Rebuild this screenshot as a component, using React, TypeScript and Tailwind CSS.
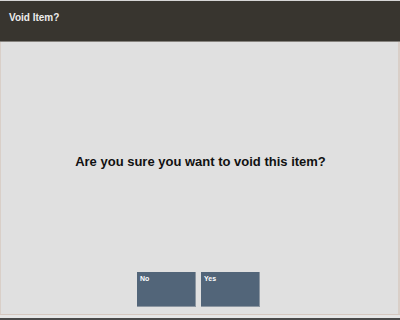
import React from 'react';

const font = { fontFamily: '"Liberation Sans", Arial, sans-serif' };

const PromptButton = ({ label }: { label: string }) => (
  <button className="flex h-[35px] w-[59px] items-start border-r border-b border-[#8c96a1] bg-[#526579] pt-[3px] pl-[3px] text-left text-[7px] leading-[8px] font-bold text-white">
    {label}
  </button>
);

const App = () => {
  return (
    <div className="flex h-[320px] w-[400px] flex-col bg-[#e0e0e0]" style={font}>
      <div className="h-px bg-[#d6d6d6]" />
      <div className="h-[40px] bg-[#38352f] pt-[11px] pl-[9px]">
        <h1 className="text-[10px] leading-[12px] font-bold text-[#ececec]">Void Item?</h1>
      </div>
      <div className="h-px bg-[#85827d]" />

      <div className="flex flex-1 flex-col border-r-2 border-l border-[#d9cfc8] bg-[#e0e0e0]">
        <p className="mt-[112px] pl-[2px] text-center text-[13px] leading-[16px] font-bold text-[#111]">
          Are you sure you want to void this item?
        </p>
        <div className="flex-1" />
        <div className="mb-[7px] flex justify-center gap-[5px] pr-[2px]">
          <PromptButton label="No" />
          <PromptButton label="Yes" />
        </div>
      </div>

      <div className="h-px bg-[#d5c8c0]" />
      <div className="h-[3px] bg-[#e6e6e6]" />
      <div className="h-[2px] bg-[#4a4a4a]" />
    </div>
  );
};

export default App;
